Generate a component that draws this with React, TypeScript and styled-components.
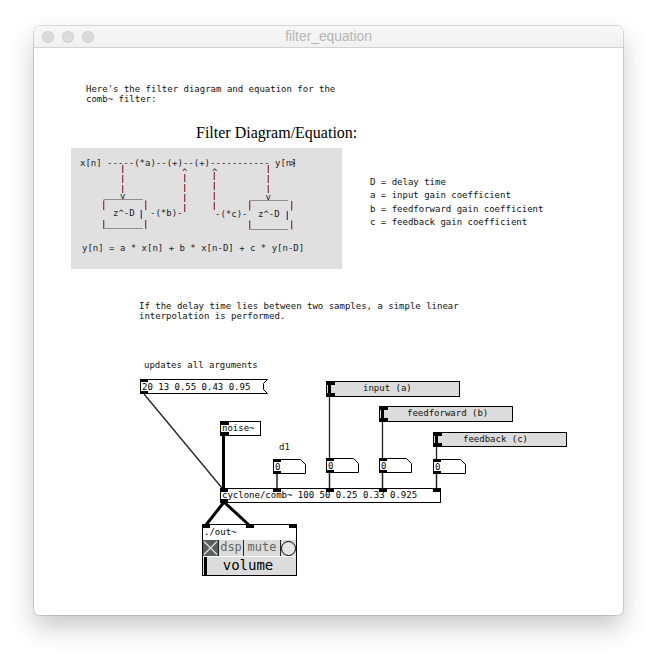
import React from "react";
import styled, { createGlobalStyle } from "styled-components";

const OX = 34;
const OY = 48;
const MONO = `"DejaVu Sans Mono", "Liberation Mono", monospace`;

const Global = createGlobalStyle`
  html, body { margin: 0; padding: 0; background: #fff; }
`;

const Page = styled.div`
  width: 657px;
  height: 657px;
  overflow: hidden;
  display: flex;
  align-items: flex-start;
  justify-content: flex-start;
  padding: 26px 0 0 34px;
  box-sizing: border-box;
`;

const Win = styled.div`
  width: 589px;
  height: 589px;
  display: flex;
  flex-direction: column;
  border-radius: 6px;
  overflow: hidden;
  background: #fff;
  box-shadow: 0 0 0 1px rgba(0, 0, 0, 0.13), 0 12px 26px rgba(0, 0, 0, 0.22);
`;

const TitleBar = styled.div`
  height: 22px;
  flex: none;
  box-sizing: border-box;
  display: flex;
  align-items: center;
  justify-content: center;
  position: relative;
  background: linear-gradient(#f7f7f7, #f1f1f1);
  border-bottom: 1px solid #d2d2d2;
`;

const Lights = styled.div`
  position: absolute;
  left: 8px;
  top: 5px;
  display: flex;
  gap: 8px;
`;

const Light = styled.span`
  width: 12px;
  height: 12px;
  border-radius: 50%;
  background: #dcdcdc;
  box-shadow: inset 0 0 0 1px #d2d2d2;
`;

const Title = styled.span`
  font: 13.8px "Liberation Sans", Arial, sans-serif;
  color: #b4b4b4;
`;

const Canvas = styled.div`
  flex: 1;
  position: relative;
  background: #fff;
`;

const Placed = styled.div<{ $x: number; $y: number }>`
  position: absolute;
  left: ${(p) => p.$x - OX}px;
  top: ${(p) => p.$y - OY}px;
`;

const Comment = styled(Placed)`
  font: 9px/10px ${MONO};
  color: #111;
  white-space: pre;
`;

const CoefList = styled(Placed)`
  display: grid;
  grid-auto-rows: 13.4px;
  font: 9px/10px ${MONO};
  color: #111;
  white-space: pre;
`;

const Heading = styled(Placed)`
  font: 16px/18px "Liberation Serif", "Times New Roman", serif;
  color: #000;
  white-space: pre;
`;

const Panel = styled(Placed)`
  width: 271px;
  height: 121px;
  background: #e0e0e0;
`;

const DiagramText = styled.span<{ $x: number; $y: number }>`
  position: absolute;
  left: ${(p) => p.$x - 71}px;
  top: ${(p) => p.$y - 148 - 5}px;
  font: 9px/10px ${MONO};
  color: #222;
  white-space: pre;
`;

const Drawing = styled.svg`
  position: absolute;
  left: 0;
  top: 0;
  width: 100%;
  height: 100%;
`;

const Port = styled.i<{ $side: "top" | "bottom"; $at?: number; $w?: number }>`
  position: absolute;
  left: ${(p) => p.$at ?? 0}px;
  ${(p) => p.$side}: 0;
  width: ${(p) => p.$w ?? 8}px;
  height: 3px;
  background: #000;
`;

const Box = styled(Placed)<{ $w: number; $h?: number }>`
  width: ${(p) => p.$w}px;
  height: ${(p) => p.$h ?? 15}px;
  box-sizing: border-box;
  border: 1px solid #000;
  background: #fff;
  font: 9px/13px ${MONO};
  color: #000;
  padding-left: 1px;
  white-space: pre;
`;

const Shaped = styled(Placed)<{ $w: number }>`
  width: ${(p) => p.$w}px;
  height: 15px;
  font: 9px/17px ${MONO};
  color: #000;
  padding-left: 2px;
  box-sizing: border-box;
  white-space: pre;
`;

const ShapeLabel = styled.span`
  position: relative;
`;

const Slider = styled(Placed)<{ $h: number }>`
  width: 134px;
  height: ${(p) => p.$h}px;
  box-sizing: border-box;
  border: 1px solid #000;
  background: #dcdcdc;
  font: 9px/13px ${MONO};
  color: #111;
`;

const SliderKnob = styled.i`
  position: absolute;
  left: 1px;
  top: 0;
  bottom: 0;
  width: 3px;
  background: #000;
`;

const SliderLabel = styled.span<{ $left: number }>`
  position: absolute;
  left: ${(p) => p.$left}px;
  top: 0;
  white-space: pre;
`;

const OutBox = styled(Placed)`
  width: 95px;
  height: 52px;
  box-sizing: border-box;
  border: 1px solid #000;
  background: #fff;
  display: flex;
  flex-direction: column;
`;

const OutName = styled.div`
  height: 15px;
  flex: none;
  font: 9px/14px ${MONO};
  padding-left: 1px;
  color: #000;
`;

const OutRow = styled.div`
  height: 16px;
  flex: none;
  display: flex;
  gap: 1px;
  background: #222;
`;

const XCell = styled.div`
  width: 15px;
  background: #58605a;
  flex: none;
`;

const ToggleCell = styled.div<{ $w: number }>`
  width: ${(p) => p.$w}px;
  flex: none;
  background: #dcdcdc;
  color: #666;
  font: 12px/14px ${MONO};
  text-align: center;
`;

const BangCell = styled.div`
  flex: 1;
  background: #dcdcdc;
  display: flex;
  align-items: center;
  justify-content: center;
`;

const BangRing = styled.span`
  width: 15px;
  height: 15px;
  border-radius: 50%;
  box-sizing: border-box;
  border: 1px solid #000;
  background: #e4e4e4;
`;

const VolumeRow = styled.div`
  flex: 1;
  margin-top: 1px;
  position: relative;
  background: #dcdcdc;
  font: 14px/16px ${MONO};
  color: #000;
  text-align: center;
  padding-right: 3px;
`;

const VolumeKnob = styled.i`
  position: absolute;
  left: 1px;
  top: 0;
  bottom: 0;
  width: 3px;
  background: #000;
`;

const Cross = () => (
  <svg width="15" height="16" viewBox="0 0 15 16" style={{ display: "block" }}>
    <path d="M1 1.5 L14 14.5 M14 1.5 L1 14.5" stroke="#dfe3df" strokeWidth="1.2" fill="none" />
  </svg>
);

const MsgOutline = () => (
  <Drawing viewBox="0 0 128 15" style={{ overflow: "visible" }}>
    <path d="M.5 .5 H127.5 L123.5 4.5 V10.5 L127.5 14.5 H.5 Z" fill="#fff" stroke="#000" />
  </Drawing>
);

const NumOutline = () => (
  <Drawing viewBox="0 0 33 15">
    <path d="M.5 .5 H27.5 L32.5 5.5 V14.5 H.5 Z" fill="#fff" stroke="#000" />
  </Drawing>
);

const NumberBox = ({ x, y }: { x: number; y: number }) => (
  <Shaped $x={x} $y={y} $w={33}>
    <NumOutline />
    <Port $side="top" />
    <Port $side="bottom" />
    <ShapeLabel>0</ShapeLabel>
  </Shaped>
);

const SliderBox = ({ x, y, h, label, left }: { x: number; y: number; h: number; label: string; left: number }) => (
  <Slider $x={x} $y={y} $h={h}>
    <SliderKnob />
    <Port $side="top" />
    <Port $side="bottom" />
    <SliderLabel $left={left}>{label}</SliderLabel>
  </Slider>
);

const RED = "#8a2f48";
const GREY = "#8e8e8e";

const DiagramLines = () => (
  <Drawing viewBox="71 148 271 121">
    <g fill="none" strokeWidth="1.2">
      <g stroke={RED} strokeDasharray="8 2">
        <path d="M122.7 165V194" />
        <path d="M184.7 174V212" />
        <path d="M214.3 172V212" />
        <path d="M268.3 165V195" />
        <path d="M103.7 200.5V210M103.7 220V229" strokeDasharray="none" />
        <path d="M145.7 200.5V210M145.7 220V229" strokeDasharray="none" />
        <path d="M249.7 201V210.5M249.7 220.5V229.5" strokeDasharray="none" />
        <path d="M291.7 201V210.5M291.7 220.5V229.5" strokeDasharray="none" />
      </g>
      <path d="M141.3 210V219M287.3 211V220" stroke="#47307f" />
      <path d="M103.5 199.5H143M103.5 228.5H143M249.5 200.5H288M249.5 229.5H288" stroke={GREY} />
    </g>
  </Drawing>
);

const Wires = () => (
  <Drawing viewBox={`${OX} ${OY} 589 567`}>
    <g fill="none" stroke="#222">
      <path d="M144 394L222 488" strokeWidth="1.3" />
      <path d="M329.5 397V458M382.5 422V458M436.5 447V459" strokeWidth="1.3" />
      <path d="M277 474V488M329.5 473V488M382.5 473V488M436.5 474V488" strokeWidth="1.5" />
    </g>
    <g fill="none" stroke="#000" strokeWidth="3">
      <path d="M223.5 436V488" />
      <path d="M224 502L206 525M224 502L249 525" />
    </g>
  </Drawing>
);

export default function App() {
  return (
    <Page>
      <Global />
      <Win>
        <TitleBar>
          <Lights>
            <Light />
            <Light />
            <Light />
          </Lights>
          <Title>filter_equation</Title>
        </TitleBar>
        <Canvas>
          <Wires />
          <Comment $x={86} $y={84}>{"Here's the filter diagram and equation for the\ncomb~ filter:"}</Comment>
          <Heading $x={196} $y={124}>Filter Diagram/Equation:</Heading>
          <Panel $x={71} $y={148}>
            <DiagramLines />
            <DiagramText $x={80} $y={163}>{"x[n] -----(*a)--(+)--(+)-----------"}</DiagramText>
            <DiagramText $x={275} $y={163}>y[n]</DiagramText>
            <DiagramText $x={290} $y={163}>&gt;</DiagramText>
            <DiagramText $x={120} $y={196}>v</DiagramText>
            <DiagramText $x={265.5} $y={197}>v</DiagramText>
            <DiagramText $x={182} $y={172}>^</DiagramText>
            <DiagramText $x={212} $y={172}>^</DiagramText>
            <DiagramText $x={113} $y={213}>z^-D</DiagramText>
            <DiagramText $x={150} $y={213}>-(*b)-</DiagramText>
            <DiagramText $x={215} $y={214}>-(*c)-</DiagramText>
            <DiagramText $x={258} $y={214}>z^-D</DiagramText>
            <DiagramText $x={82} $y={248}>y[n] = a * x[n] + b * x[n-D] + c * y[n-D]</DiagramText>
          </Panel>
          <CoefList $x={370} $y={177}>
            <span>D = delay time</span>
            <span>a = input gain coefficient</span>
            <span>b = feedforward gain coefficient</span>
            <span>c = feedback gain coefficient</span>
          </CoefList>
          <Comment $x={139} $y={301}>{"If the delay time lies between two samples, a simple linear\ninterpolation is performed."}</Comment>
          <Comment $x={144} $y={360}>updates all arguments</Comment>
          <Shaped $x={140} $y={379} $w={128}>
            <MsgOutline />
            <Port $side="top" />
            <Port $side="bottom" />
            <ShapeLabel>20 13 0.55 0.43 0.95</ShapeLabel>
          </Shaped>
          <Box $x={220} $y={421} $w={41}>
            <Port $side="top" />
            <Port $side="bottom" />
            noise~
          </Box>
          <Comment $x={279} $y={442}>d1</Comment>
          <NumberBox x={273} y={459} />
          <NumberBox x={326} y={458} />
          <NumberBox x={379} y={458} />
          <NumberBox x={433} y={459} />
          <SliderBox x={326} y={381} h={16} label="input (a)" left={36} />
          <SliderBox x={379} y={406} h={16} label="feedforward (b)" left={27} />
          <SliderBox x={433} y={432} h={15} label="feedback (c)" left={29} />
          <Box $x={220} $y={488} $w={221}>
            <Port $side="top" $at={-1} />
            <Port $side="top" $at={52} />
            <Port $side="top" $at={105} />
            <Port $side="top" $at={158} />
            <Port $side="top" $at={212} />
            <Port $side="bottom" $at={-1} />
            cyclone/comb~ 100 50 0.25 0.33 0.925
          </Box>
          <OutBox $x={202} $y={524}>
            <Port $side="top" $at={-1} />
            <Port $side="top" $at={43} />
            <Port $side="top" $at={86} />
            <OutName>./out~</OutName>
            <OutRow>
              <XCell>
                <Cross />
              </XCell>
              <ToggleCell $w={24}>dsp</ToggleCell>
              <ToggleCell $w={36}>mute</ToggleCell>
              <BangCell>
                <BangRing />
              </BangCell>
            </OutRow>
            <VolumeRow>
              <VolumeKnob />
              volume
            </VolumeRow>
          </OutBox>
        </Canvas>
      </Win>
    </Page>
  );
}
